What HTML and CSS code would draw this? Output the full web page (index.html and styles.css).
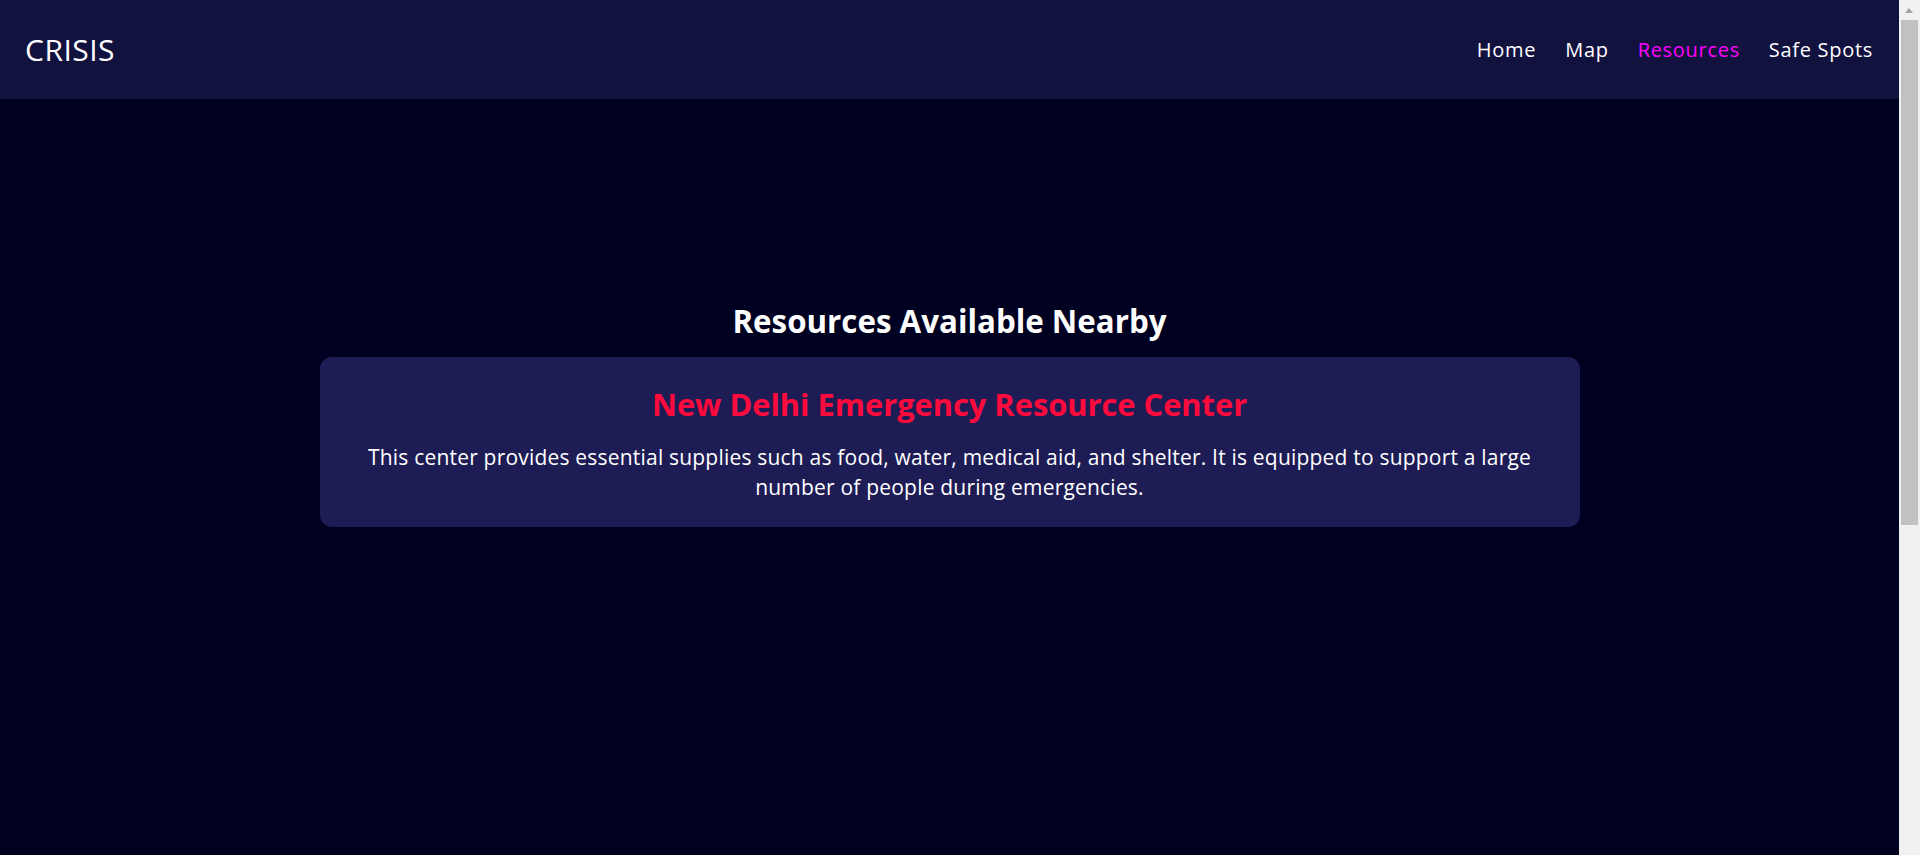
FILE: index.html
```html
<!DOCTYPE html>
<html lang="en">
<head>
<meta charset="utf-8">
<title>CRISIS - Resources</title>
<link rel="stylesheet" href="styles.css">
</head>
<body>
<div class="page">
  <header class="site-header">
    <div class="logo">CRISIS</div>
    <nav class="nav">
      <a href="#" class="nav-link">Home</a>
      <a href="#" class="nav-link">Map</a>
      <a href="#" class="nav-link active">Resources</a>
      <a href="#" class="nav-link">Safe Spots</a>
    </nav>
  </header>
  <main class="main">
    <h1 class="page-title">Resources Available Nearby</h1>
    <section class="card">
      <h2 class="card-title">New Delhi Emergency Resource Center</h2>
      <p class="card-text">This center provides essential supplies such as food, water, medical aid, and shelter. It is equipped to support a large number of people during emergencies.</p>
    </section>
  </main>
</div>
<div class="scrollbar" aria-hidden="true">
  <span class="scroll-arrow"></span>
  <span class="scroll-thumb"></span>
</div>
</body>
</html>
```

FILE: styles.css
```css
* { box-sizing: border-box; }
html, body { margin: 0; padding: 0; }
body {
  background: #000020;
  color: #ffffff;
  font-family: "Open Sans", "DejaVu Sans", sans-serif;
}
.page {
  margin-right: 21px;
}
.site-header {
  height: 99px;
  background: #12123f;
  display: flex;
  align-items: center;
  justify-content: space-between;
  padding: 0 26px 0 25px;
}
.logo {
  font-size: 30px;
  font-weight: 400;
  letter-spacing: 0.5px;
}
.nav {
  display: flex;
  gap: 29px;
}
.nav-link {
  color: #ffffff;
  text-decoration: none;
  font-size: 20px;
  letter-spacing: 0.7px;
}
.nav-link.active { color: #ff00ff; }
.main {
  min-height: 1286px;
  padding-top: 198px;
  display: flex;
  flex-direction: column;
  align-items: center;
}
.page-title {
  margin: 0 0 12px;
  font-size: 31.3px;
  font-weight: 700;
  line-height: 48px;
}
.card {
  width: 1260px;
  background: #1e1c54;
  border-radius: 12px;
  padding: 23px 30px 25px;
  text-align: center;
}
.card-title {
  margin: 0 0 14px;
  color: #ff0a3c;
  font-size: 30.8px;
  font-weight: 700;
  line-height: 48px;
}
.card-text {
  margin: 0;
  font-size: 21px;
  line-height: 30px;
  letter-spacing: 0.2px;
}
.scrollbar {
  position: fixed;
  top: 0;
  right: 0;
  width: 21px;
  height: 100vh;
  background: #f1f1f1;
}
.scroll-arrow {
  position: absolute;
  top: 8px;
  left: 6px;
  width: 0;
  height: 0;
  border-left: 4.5px solid transparent;
  border-right: 4.5px solid transparent;
  border-bottom: 5px solid #a3a3a3;
}
.scroll-thumb {
  position: absolute;
  top: 20px;
  left: 2px;
  width: 17px;
  height: 505px;
  background: #c1c1c1;
}
```
